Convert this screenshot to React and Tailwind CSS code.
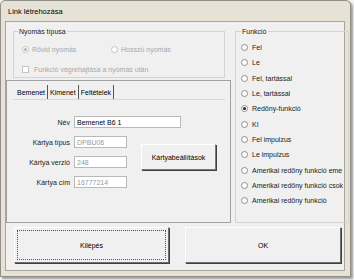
import React from 'react';

const FONT = { fontFamily: '"Liberation Sans", Arial, sans-serif' };

const FUNCTIONS = [
  'Fel',
  'Le',
  'Fel, tartással',
  'Le, tartással',
  'Redőny-funkció',
  'KI',
  'Fel impulzus',
  'Le impulzus',
  'Amerikai redőny funkció eme',
  'Amerikai redőny funkció csok',
  'Amerikai redőny funkció',
];

function Radio({ checked, disabled }) {
  return (
    <span
      className={`flex h-[7px] w-[7px] shrink-0 items-center justify-center rounded-full border bg-white ${
        disabled ? 'border-[#c4c4c4]' : 'border-[#8d8d8d]'
      }`}
    >
      {checked && <span className={`h-[3px] w-[3px] rounded-full ${disabled ? 'bg-[#b0b0b0]' : 'bg-[#222]'}`} />}
    </span>
  );
}

function Field({ label, value, width, muted }) {
  return (
    <div className="flex h-[20px] items-center">
      <span className="w-[61px] pr-[4px] text-right">{label}</span>
      <div
        className={`flex h-[12px] items-center border border-[#b9b9b9] bg-white pl-[2px] ${width} ${
          muted ? 'text-[#9a9a9a]' : 'text-black'
        }`}
      >
        {value}
      </div>
    </div>
  );
}

export default function App() {
  return (
    <div
      className="h-[280px] w-[354px] overflow-hidden bg-[#f4f4f4] text-[7px] leading-[9px] text-[#222]"
      style={FONT}
    >
      <div className="h-[277px] w-[351px] rounded-t-[5px] border border-[#8f8f88] bg-[#e6e3d6] shadow-[2px_2px_2px_rgba(0,0,0,0.35)]">
        {/* Title */}
        <div className="flex h-[20px] items-center pl-[7px] text-[7.5px] text-black">Link létrehozása</div>

        {/* Client area */}
        <div className="ml-[4px] h-[250px] w-[340px] border border-[#a9a79c] bg-[#f0f0f0]">
          <div className="flex">
            {/* Left column */}
            <div className="w-[225px]">
              <fieldset className="ml-[7px] mt-[5px] h-[51px] w-[212px] border border-[#d5d4cc] px-[4px]">
                <legend className="px-[1px] text-[#222]">Nyomás típusa</legend>
                <div className="mt-[9px] flex items-center text-[#a8a8a8]">
                  <div className="flex w-[93px] items-center gap-[3px] pl-[4px]">
                    <Radio checked disabled />
                    <span>Rövid nyomás</span>
                  </div>
                  <div className="flex items-center gap-[3px]">
                    <Radio disabled />
                    <span>Hosszú nyomás</span>
                  </div>
                </div>
                <div className="mt-[11px] flex items-center gap-[5px] pl-[4px] text-[#a8a8a8]">
                  <span className="h-[7px] w-[7px] border border-[#c4c4c4] bg-white" />
                  <span>Funkció végrehajtása a nyomás után</span>
                </div>
              </fieldset>

              {/* Tabs */}
              <div className="ml-[0px] mt-[2px] h-[143px] w-[225px] border-l border-t border-r border-b border-[#a0a0a0] bg-[#f0f0f0]">
                <div className="flex h-[18px] items-end pl-[10px] text-black">
                  <div className="flex h-[14px] items-center border-r border-[#555] pr-[2px]">Bemenet</div>
                  <div className="flex h-[14px] items-center border-r border-[#555] px-[2px]">Kimenet</div>
                  <div className="flex h-[14px] items-center border-r border-[#555] px-[2px]">Feltételek</div>
                </div>
                <div className="ml-[6px] flex h-[123px] w-[212px] border-t border-[#d8d8d8] pt-[12px]">
                  <div className="flex flex-col">
                    <Field label="Név" value="Bemenet B6 1" width="w-[107px]" />
                    <Field label="Kártya típus" value="DPBU06" width="w-[53px]" muted />
                    <Field label="Kártya verzió" value="248" width="w-[53px]" muted />
                    <Field label="Kártya cím" value="16777214" width="w-[53px]" muted />
                  </div>
                  <div className="ml-[-40px] mt-[32px]">
                    <button className="flex h-[26px] w-[75px] items-center justify-center border border-[#fff] border-b-[#7a7a7a] border-r-[#7a7a7a] bg-[#f0f0f0] text-black shadow-[1px_1px_0_#404040]">
                      Kártyabeállítások
                    </button>
                  </div>
                </div>
              </div>
            </div>

            {/* Right column */}
            <fieldset className="ml-[4px] mt-[5px] h-[196px] w-[105px] border border-[#d5d4cc] px-[5px]">
              <legend className="px-[1px] text-[#222]">Funkció</legend>
              <div className="mt-[4px] flex flex-col">
                {FUNCTIONS.map((f, i) => (
                  <div key={f} className="flex h-[15.3px] items-center gap-[4px] whitespace-nowrap">
                    <Radio checked={i === 4} />
                    <span>{f}</span>
                  </div>
                ))}
              </div>
            </fieldset>
          </div>

          {/* Buttons */}
          <div className="mt-[4px] flex">
            <button className="ml-[8px] flex h-[36px] w-[155px] items-center justify-center border border-[#fff] border-b-[#6e6e6e] border-r-[#6e6e6e] bg-[#f0f0f0] p-[2px] text-black shadow-[1px_1px_0_#404040]">
              <span className="flex h-full w-full items-center justify-center border border-dotted border-[#555]">Kilépés</span>
            </button>
            <button className="ml-[16px] flex h-[36px] w-[156px] items-center justify-center border border-[#fff] border-b-[#6e6e6e] border-r-[#6e6e6e] bg-[#f0f0f0] text-black shadow-[1px_1px_0_#404040]">
              OK
            </button>
          </div>
        </div>
      </div>
    </div>
  );
}
